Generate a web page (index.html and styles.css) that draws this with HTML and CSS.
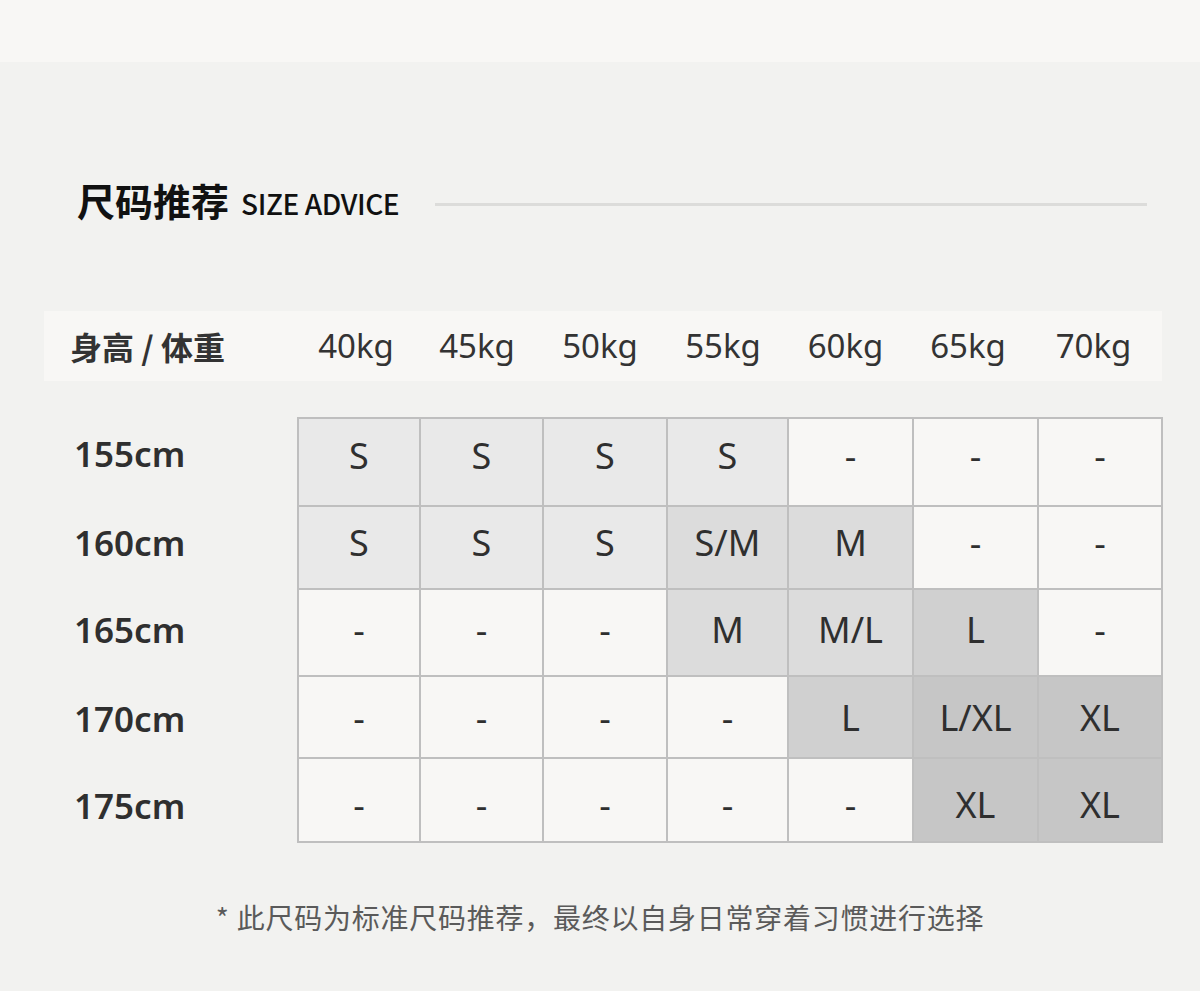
FILE: index.html
```html
<!DOCTYPE html>
<html lang="zh-CN">
<head>
<meta charset="utf-8">
<title>尺码推荐</title>
<link rel="stylesheet" href="styles.css">
</head>
<body>
<div class="topband"></div>
<div class="main">
  <div class="title-row">
    <span class="title-zh">尺码推荐</span>
    <span class="title-en">SIZE ADVICE</span>
    <span class="title-line"></span>
  </div>

  <div class="head-bar">
    <div class="head-label">身高 / 体重</div>
    <div class="head-cols">
      <span>40kg</span><span>45kg</span><span>50kg</span><span>55kg</span><span>60kg</span><span>65kg</span><span>70kg</span>
    </div>
  </div>

  <div class="table">
    <div class="row r1">
      <div class="row-label">155cm</div>
      <div class="cells">
        <div class="cell c1">S</div><div class="cell c1">S</div><div class="cell c1">S</div><div class="cell c1">S</div><div class="cell c0">-</div><div class="cell c0">-</div><div class="cell c0">-</div>
      </div>
    </div>
    <div class="row r2">
      <div class="row-label">160cm</div>
      <div class="cells">
        <div class="cell c1">S</div><div class="cell c1">S</div><div class="cell c1">S</div><div class="cell c2">S/M</div><div class="cell c2">M</div><div class="cell c0">-</div><div class="cell c0">-</div>
      </div>
    </div>
    <div class="row r3">
      <div class="row-label">165cm</div>
      <div class="cells">
        <div class="cell c0">-</div><div class="cell c0">-</div><div class="cell c0">-</div><div class="cell c2">M</div><div class="cell c2">M/L</div><div class="cell c3">L</div><div class="cell c0">-</div>
      </div>
    </div>
    <div class="row r4">
      <div class="row-label">170cm</div>
      <div class="cells">
        <div class="cell c0">-</div><div class="cell c0">-</div><div class="cell c0">-</div><div class="cell c0">-</div><div class="cell c3">L</div><div class="cell c4">L/XL</div><div class="cell c4">XL</div>
      </div>
    </div>
    <div class="row r5">
      <div class="row-label">175cm</div>
      <div class="cells">
        <div class="cell c0">-</div><div class="cell c0">-</div><div class="cell c0">-</div><div class="cell c0">-</div><div class="cell c0">-</div><div class="cell c4">XL</div><div class="cell c4">XL</div>
      </div>
    </div>
  </div>
</div>
<p class="note">* 此尺码为标准尺码推荐，最终以自身日常穿着习惯进行选择</p>
</body>
</html>
```

FILE: styles.css
```css
* { box-sizing: border-box; }

html, body {
  margin: 0;
  padding: 0;
  background: #f2f2f0;
  font-family: "Noto Sans", "Noto Sans CJK SC", sans-serif;
  color: #333;
}

body {
  width: 1200px;
  height: 991px;
  overflow: hidden;
}

.topband {
  height: 62px;
  background: #f8f7f5;
}

.main {
  padding: 0 38px 0 44px;
}

.title-row {
  display: flex;
  align-items: center;
  height: 40px;
  margin-top: 118px;
  padding: 0 15px 0 33px;
}

.title-zh {
  font-family: "Noto Sans CJK SC", sans-serif;
  font-size: 38px;
  font-weight: 700;
  color: #111;
  line-height: 40px;
}

.title-en {
  font-family: "Noto Sans CJK SC", sans-serif;
  font-size: 28px;
  font-weight: 500;
  color: #111;
  margin-left: 12px;
  letter-spacing: -0.4px;
  line-height: 40px;
  margin-top: 6px;
}

.title-line {
  flex: 1;
  height: 3px;
  background: #dcdcda;
  margin-left: 36px;
  margin-top: 8px;
}

.head-bar {
  margin-top: 91px;
  height: 70px;
  background: #f8f7f5;
  display: grid;
  grid-template-columns: 253px 1fr;
  align-items: center;
}

.head-label {
  padding-left: 26px;
  font-family: "Noto Sans CJK SC", sans-serif;
  font-size: 32px;
  font-weight: 700;
  color: #333;
}

.head-cols {
  display: grid;
  grid-template-columns: 118px 124px 122px 124px 121px 124px 127px;
  font-size: 33px;
  color: #333;
  margin-top: -2px;
}

.head-cols span {
  text-align: center;
}

.table {
  margin-top: 36px;
}

.row {
  display: grid;
  grid-template-columns: 253px 866px;
}

.row-label {
  display: flex;
  align-items: center;
  padding-left: 30px;
  font-size: 35px;
  font-weight: 600;
  color: #2f2f2f;
}

.cells {
  display: grid;
  grid-template-columns: 120px 121px 122px 119px 123px 123px 122px;
  column-gap: 2px;
  background: #bfbfbf;
  padding: 0 2px 2px 2px;
}

.r1 .cells { padding-top: 2px; }

.cell {
  display: flex;
  align-items: center;
  justify-content: center;
  font-size: 36px;
  color: #2f2f2f;
}

.r1 .cell { height: 86px; padding-bottom: 13px; }
.r2 .cell { height: 81px; padding-bottom: 11px; }
.r3 .cell { height: 85px; padding-bottom: 7px; }
.r4 .cell { height: 80px; padding-top: 1px; }
.r5 .cell { height: 82px; padding-top: 8px; }

.r1 .row-label { padding-bottom: 18px; }
.r2 .row-label { padding-bottom: 13px; }
.r3 .row-label { padding-bottom: 9px; }
.r4 .row-label { padding-top: 0; }
.r5 .row-label { padding-top: 8px; }

.c0 { background: #f8f7f5; }
.c1 { background: #e9e9e9; }
.c2 { background: #dcdcdc; }
.c3 { background: #d0d0d0; }
.c4 { background: #c6c6c6; }

.note {
  margin: 54px 0 0;
  text-align: center;
  font-family: "Noto Sans CJK SC", sans-serif;
  font-size: 28px;
  line-height: 40px;
  color: #5a5a5a;
  letter-spacing: 0.75px;
}
```
